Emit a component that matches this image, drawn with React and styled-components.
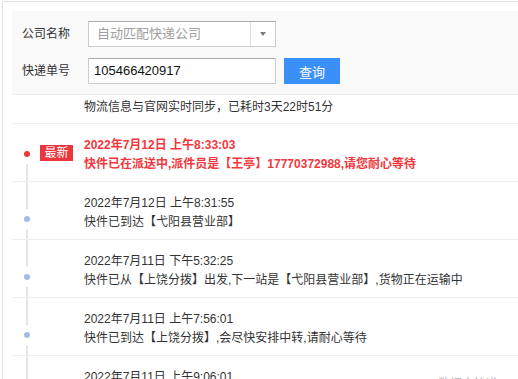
import React from "react";
import styled, { createGlobalStyle } from "styled-components";

const Global = createGlobalStyle`
  html, body { margin: 0; padding: 0; overflow: hidden; background: #fff; }
  body { font-family: "Liberation Sans", "Noto Sans CJK SC", sans-serif; font-size: 12px; color: #333; }
`;

const Frame = styled.div`
  position: relative;
  margin: 1px 0 0 2px;
  border-top: 1px solid #e2e2e2;
  border-left: 1px solid #e2e2e2;
  padding: 9px 0 0 9px;
  height: 400px;
`;

const Panel = styled.div`
  background: #f9f9f9;
  border-bottom: 1px solid #eee;
  padding: 10px 0 10px 10px;
  display: flex;
  flex-direction: column;
  gap: 11px;
`;

const FormRow = styled.div`
  display: flex;
  align-items: center;
`;

const Label = styled.div`
  width: 66px;
  font-size: 12px;
  line-height: 26px;
  color: #333;
`;

const Field = styled.div`
  box-sizing: border-box;
  width: 188px;
  height: 26px;
  background: #fff;
  border: 1px solid #ccc;
  border-top-color: #aaa;
  display: flex;
  align-items: center;
  font-size: 13px;
  color: ${(p) => (p.$placeholder ? "#a0a0a0" : "#111")};
`;

const FieldText = styled.div`
  flex: 1;
  padding-left: ${(p) => p.$pad || 8}px;
  white-space: nowrap;
  line-height: 24px;
`;

const ArrowBox = styled.div`
  width: 24px;
  height: 100%;
  border-left: 1px solid #ddd;
  display: flex;
  align-items: center;
  justify-content: center;
  &::after {
    content: "";
    border-left: 3.5px solid transparent;
    border-right: 3.5px solid transparent;
    border-top: 4px solid #7a7a7a;
  }
`;

const Button = styled.button`
  margin-left: 8px;
  width: 56px;
  height: 26px;
  border: none;
  background: #3b8ff8;
  color: #fff;
  font-family: "Liberation Sans", "Noto Sans CJK SC", sans-serif;
  font-size: 13px;
  padding: 0;
`;

const Status = styled.div`
  padding: 3px 0 6px 72px;
  line-height: 19px;
  color: #333;
  white-space: nowrap;
`;

const Item = styled.div`
  display: flex;
  border-top: 1px solid #efefef;
  height: 57px;
`;

const Rail = styled.div`
  width: 30px;
  display: flex;
  flex-direction: column;
  align-items: center;
`;

const Seg = styled.div`
  width: 2px;
  background: ${(p) => (p.$hidden ? "transparent" : "#e6e6e6")};
  height: ${(p) => (p.$h ? `${p.$h}px` : "auto")};
  flex: ${(p) => (p.$h ? "none" : "1")};
`;

const Dot = styled.div`
  width: 6px;
  height: 6px;
  border-radius: 50%;
  margin: 7px 0;
  background: ${(p) => (p.$latest ? "#f0393d" : "#a3bbe7")};
`;

const TagCol = styled.div`
  width: 42px;
  padding-top: 21px;
`;

const Badge = styled.div`
  margin-left: -2px;
  width: 33px;
  height: 16px;
  background: #ea363c;
  color: #fff;
  font-size: 12px;
  line-height: 16px;
  text-align: center;
`;

const Content = styled.div`
  padding-top: 12px;
  line-height: 19px;
  white-space: nowrap;
  color: ${(p) => (p.$latest ? "#f2383d" : "#333")};
  font-weight: ${(p) => (p.$latest ? "bold" : "normal")};
`;

const Source = styled.div`
  position: absolute;
  left: 435px;
  top: 372px;
  color: #b0b0b0;
  font-size: 12px;
  white-space: nowrap;
`;

const items = [
  {
    time: "2022年7月12日 上午8:33:03",
    text: "快件已在派送中,派件员是【王亭】17770372988,请您耐心等待",
    latest: true,
  },
  { time: "2022年7月12日 上午8:31:55", text: "快件已到达【弋阳县营业部】" },
  {
    time: "2022年7月11日 下午5:32:25",
    text: "快件已从【上饶分拨】出发,下一站是【弋阳县营业部】,货物正在运输中",
  },
  {
    time: "2022年7月11日 上午7:56:01",
    text: "快件已到达【上饶分拨】,会尽快安排中转,请耐心等待",
  },
  { time: "2022年7月11日 上午9:06:01", text: "快件已从【南昌转运中心】出发,下一站是【上饶分拨】" },
];

export default function App() {
  return (
    <>
      <Global />
      <Frame>
        <Panel>
          <FormRow>
            <Label>公司名称</Label>
            <Field $placeholder>
              <FieldText>自动匹配快递公司</FieldText>
              <ArrowBox />
            </Field>
          </FormRow>
          <FormRow>
            <Label>快递单号</Label>
            <Field>
              <FieldText $pad={5}>105466420917</FieldText>
            </Field>
            <Button>查询</Button>
          </FormRow>
        </Panel>
        <Status>物流信息与官网实时同步，已耗时3天22时51分</Status>
        {items.map((it, i) => (
          <Item key={i}>
            <Rail>
              <Seg $h={it.latest ? 20 : 27} $hidden={i === 0} />
              <Dot $latest={it.latest} />
              <Seg />
            </Rail>
            <TagCol>{it.latest && <Badge>最新</Badge>}</TagCol>
            <Content $latest={it.latest}>
              <div>{it.time}</div>
              <div>{it.text}</div>
            </Content>
          </Item>
        ))}
        <Source>数据由快递100提供</Source>
      </Frame>
    </>
  );
}
